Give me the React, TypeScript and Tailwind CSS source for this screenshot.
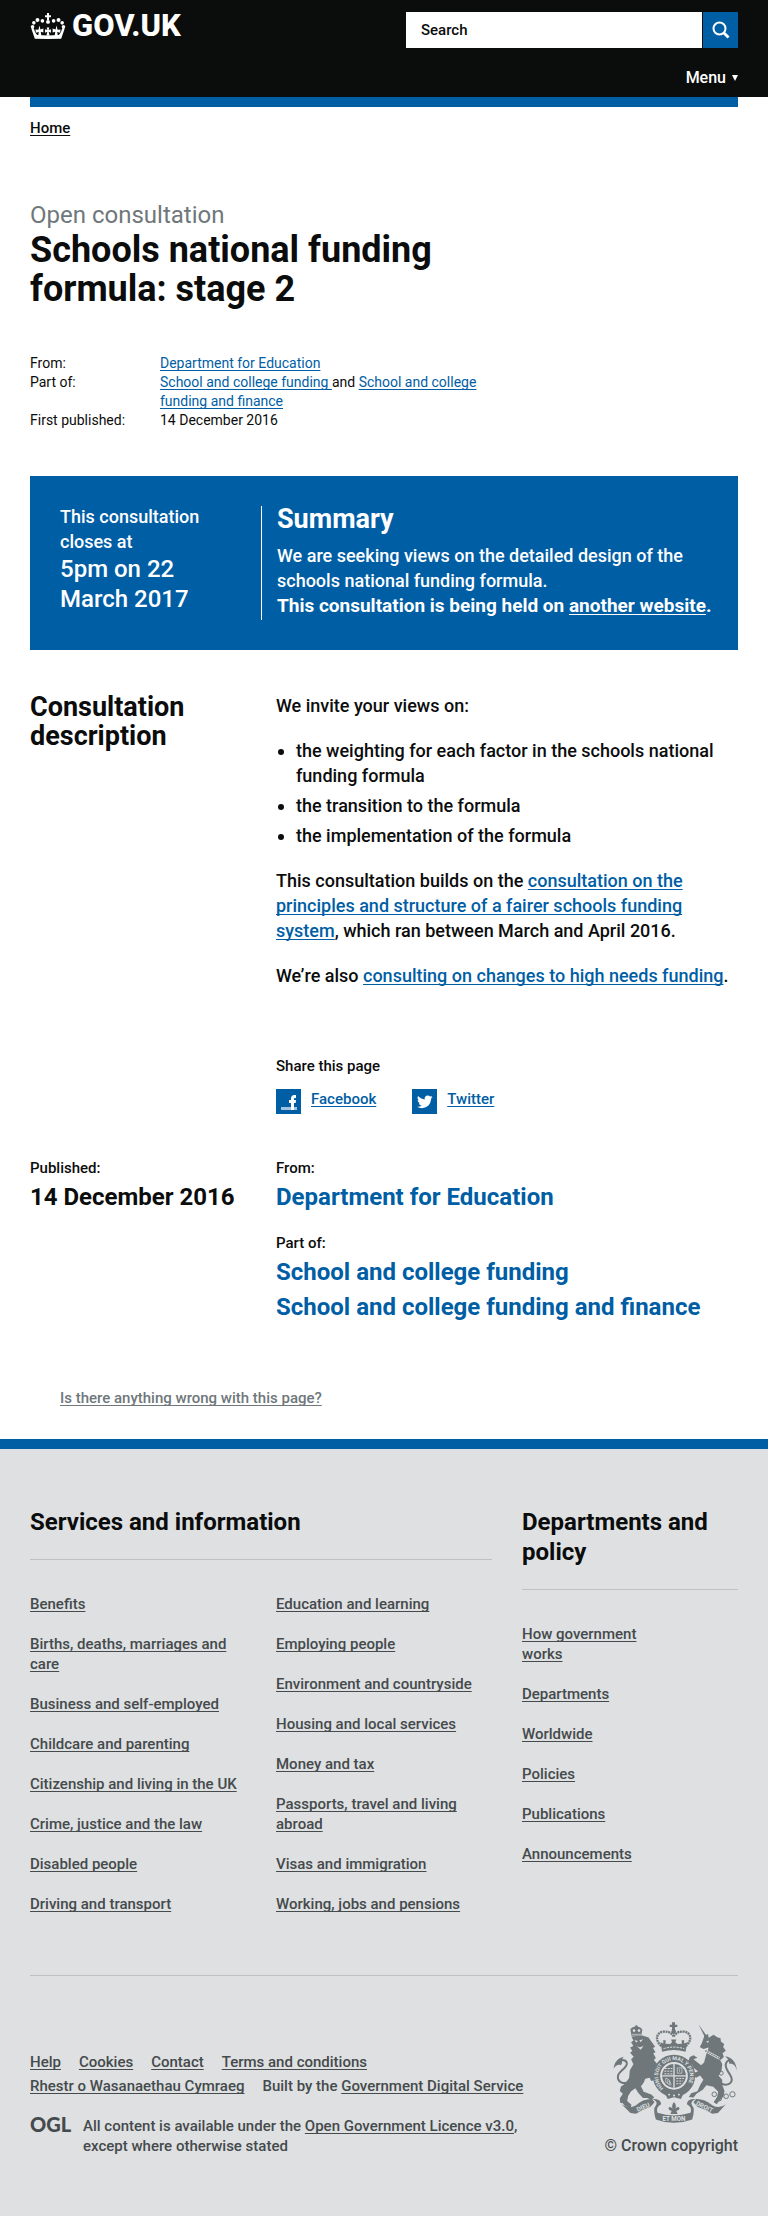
import type { ReactNode } from "react";

const u = "underline decoration-1 underline-offset-2 [text-decoration-skip-ink:none]";

function Link({ children, className = "text-[#005ea5]" }: { children: ReactNode; className?: string }) {
  return (
    <a href="#" className={`${u} ${className}`}>
      {children}
    </a>
  );
}

function CrownHalf() {
  return (
    <>
      <circle cx="7" cy="42" r="5.5" />
      <circle cx="11" cy="30" r="5.5" />
      <circle cx="22" cy="21" r="6" />
      <circle cx="37" cy="24" r="5.5" />
      <path d="M3 46 L11 46 C13 56 17 63 22 67 L54 68 V79 L14 78 Z" />
      <path d="M28 38 L31 50 L40 47 V59 L32 57 L34 70 H24 L26 58 L17 60 L16 50 L25 51 Z" />
    </>
  );
}

function Crown() {
  return (
    <svg viewBox="0 0 108 79" className="h-[26px] w-[36px]" fill="#fff" aria-hidden="true">
      <CrownHalf />
      <g transform="translate(108 0) scale(-1 1)">
        <CrownHalf />
      </g>
      <path d="M51 0h6v7h6v6h-6v8h-6v-8h-6V7h6z" />
      <circle cx="54" cy="27" r="6" />
      <path d="M50 44h8l-2 8 7-3v11l-7-3 3 12H49l3-12-7 3V49l7 3z" />
    </svg>
  );
}

function Crest() {
  return (
    <svg viewBox="12 12 380 312" className="h-[103px] w-[126px]" fill="#6f777b" aria-hidden="true">
      {/* lion */}
      <g fill="none" stroke="#6f777b">
        <path d="M66 196 C44 206 28 196 29 180 C30 164 54 158 56 142 C57 132 46 128 34 132" strokeWidth="6" />
      </g>
      <path d="M16 156 C18 138 28 124 47 120 C38 128 46 136 38 146 C32 142 22 146 16 156Z" />
      <path d="M67 36 L74 31 L85 28 L97 32 L103 38 L100 56 L70 57Z" />
      <circle cx="85" cy="29" r="4" />
      <g fill="#dee0e2">
        <circle cx="78" cy="41" r="4" />
        <circle cx="93" cy="41" r="4" />
        <path d="M71 51h28v2H71z" />
      </g>
      <path d="M70 59 L103 56 L122 62 L132 76 L142 90 L135 94 L143 107 L136 110 L144 124 L138 130 L148 142 L160 152 L156 160 L147 156 L154 174 L145 179 L137 173 L143 190 L130 194 L125 184 L112 187 L107 199 L99 210 L107 226 L130 235 L139 243 L131 251 L118 245 L105 245 L91 230 L82 216 L69 225 L60 239 L57 254 L70 266 L68 274 L51 270 L44 261 L36 260 L35 246 L44 232 L35 224 L38 211 L51 201 L63 185 L65 162 L76 143 L69 128 L77 120 L66 108 L73 103 L66 92 L76 88 L69 76 L76 71Z" />
      <path d="M80 69 L90 73 L84 77Z M94 70 L105 67 L98 76Z M86 88 Q95 95 107 87 L98 99Z" fill="#dee0e2" />

      {/* unicorn */}
      <path d="M273 22 L298 57 L293 62Z" />
      <path d="M291 57 L302 51 L304 63 L319 54 L330 61 L340 64 L341 74 L351 82 L348 91 L356 102 L346 110 L350 121 L340 130 L330 120 L300 106 L304 92 L288 97 L277 91 L283 80Z" />
      <path d="M298 108 L338 129 L345 142 L343 163 L334 178 L345 190 L345 205 L352 224 L349 241 L337 253 L328 264 L319 257 L329 244 L333 226 L318 211 L297 207 L286 220 L267 232 L258 244 L244 242 L251 231 L270 225 L278 207 L288 190 L278 177 L266 184 L253 175 L249 160 L262 168 L272 164 L259 154 L253 143 L241 138 L247 121 L258 116 L270 123 L258 128 L281 146 L290 138Z" />
      <path d="M294 102 L336 125" stroke="#dee0e2" strokeWidth="8" />
      <path d="M294 102 L336 125" stroke="#6f777b" strokeWidth="5" strokeDasharray="4 3" />
      <path d="M296 75 l9-4-3 8z" fill="#dee0e2" />
      <g fill="none" stroke="#6f777b">
        <path d="M343 202 C363 211 379 198 372 181 C366 167 350 155 357 139 C361 130 369 130 375 134" strokeWidth="6" />
        <g strokeWidth="3">
          <circle cx="321" cy="234" r="7" />
          <circle cx="336" cy="247" r="7" />
          <circle cx="357" cy="240" r="7" />
          <circle cx="376" cy="234" r="8" />
          <circle cx="342" cy="170" r="6" />
        </g>
      </g>
      <path d="M389 163 C386 146 378 140 367 142 C366 130 360 126 354 119 C374 122 389 138 389 163Z" />

      {/* royal crown */}
      <path d="M193 16h9v7h7v7h-7v9h-9v-9h-7v-7h7z" />
      <circle cx="198" cy="44" r="7" />
      <g fill="none" stroke="#6f777b" strokeWidth="7" strokeDasharray="6 2">
        <path d="M160 88 C138 66 148 45 169 44 C186 43 194 52 198 59" />
        <path d="M235 88 C258 66 248 45 227 44 C210 43 202 52 198 59" />
      </g>
      <path d="M158 76 L167 80 L166 70 H174 L173 81 L187 82 L193 76 L190 68 H206 L203 76 L210 82 L223 81 L222 70 H230 L229 80 L239 76 L234 105 Q198 95 163 105Z" />
      <path d="M167 96 Q198 86 230 96" fill="none" stroke="#dee0e2" strokeWidth="3" strokeDasharray="7 3" />

      {/* garter and shield */}
      <circle cx="199" cy="178" r="53" fill="none" stroke="#6f777b" strokeWidth="22" />
      <circle cx="199" cy="178" r="40" fill="#dee0e2" />
      <circle cx="199" cy="178" r="36" />
      <path id="garter" d="M170 217 A48 48 0 1 1 228 217" fill="none" />
      <text fontFamily="Roboto" fontSize="16" fontWeight="700" fill="#dee0e2">
        <textPath href="#garter" startOffset="3">
          HONI SOIT QUI MAL Y PENSE
        </textPath>
      </text>
      <g stroke="#dee0e2" strokeWidth="3" fill="none">
        <path d="M199 142V214M163 178H235" strokeWidth="4" />
        <path d="M171 156h23M170 164h24M170 172h24" strokeDasharray="6 3" />
        <path d="M206 186h23M206 194h20M206 202h15" strokeDasharray="6 3" />
        <path d="M209 154h14v16h-14zM216 158v8" strokeWidth="2" />
        <path d="M174 185q14 3 16 22M174 185v12l14 10M180 189v12M185 192v11" strokeWidth="2" />
      </g>
      <path d="M172 232 L199 237 L227 232 L220 248 L199 243 L180 248Z" />
      <g fill="#dee0e2">
        <circle cx="184" cy="235" r="3" />
        <circle cx="199" cy="238" r="3" />
        <circle cx="214" cy="235" r="3" />
      </g>

      {/* rose and scroll */}
      <path d="M199 257 Q208 267 203 278 Q211 268 216 276 Q214 285 206 284 L210 294 H188 L192 284 Q184 285 182 276 Q187 268 195 278 Q190 267 199 257Z" />
      <path d="M40 264 Q62 280 84 267 Q106 247 132 248 L140 258 L128 272 Q104 280 84 293 L67 291Z" />
      <path d="M356 264 Q336 280 315 267 Q291 247 266 248 L258 258 L270 272 Q295 280 315 293 L332 291Z" />
      <path d="M133 248 Q160 247 160 264 Q143 273 149 290 Q198 306 249 290 Q255 273 238 264 Q238 247 265 248 Q246 256 254 268 Q264 278 254 310 Q198 331 144 310 Q134 278 144 268 Q152 256 133 248Z" />
      <g fontFamily="Roboto" fontSize="19" fontWeight="700" fill="#dee0e2" textAnchor="middle">
        <text x="106" y="279" transform="rotate(-24 106 274)">
          DIEU
        </text>
        <text x="199" y="315">
          ET MON
        </text>
        <text x="290" y="277" transform="rotate(26 288 274)">
          DROIT
        </text>
      </g>
    </svg>
  );
}

function FacebookIcon() {
  return (
    <svg viewBox="0 0 25 25" className="size-[25px] shrink-0" aria-hidden="true">
      <path fill="#005ea5" d="M0 0h25v25H0z" />
      <path fill="#9fc3e0" d="M5 18h16v3H5z" />
      <path fill="#fff" d="M15 21v-7h-2v-3h2V9.500c0-2.300 1.300-3.500 3.300-3.500H20v3h-1.200c-.6 0-.8.3-.8.900V11h2l-.3 3H18v7z" />
    </svg>
  );
}

function TwitterIcon() {
  return (
    <svg viewBox="0 0 25 25" className="size-[25px] shrink-0" aria-hidden="true">
      <path fill="#005ea5" d="M0 0h25v25H0z" />
      <g transform="translate(5 5) scale(.65)">
        <path
          fill="#fff"
          d="M23.950 4.570a10 10 0 0 1-2.820.77 4.960 4.960 0 0 0 2.160-2.720c-.95.55-2 .95-3.130 1.180a4.920 4.920 0 0 0-8.380 4.480C7.690 8.090 4.070 6.130 1.640 3.160a4.920 4.920 0 0 0 1.520 6.570 4.900 4.900 0 0 1-2.230-.61v.06c0 2.380 1.690 4.370 3.950 4.830a5 5 0 0 1-2.210.08 4.940 4.940 0 0 0 4.600 3.420A9.870 9.870 0 0 1 0 19.540a13.990 13.990 0 0 0 7.550 2.210c9.050 0 14-7.500 14-13.980 0-.21 0-.42-.02-.63a9.940 9.940 0 0 0 2.460-2.550z"
        />
      </g>
    </svg>
  );
}

const services1 = [
  "Benefits",
  "Births, deaths, marriages and care",
  "Business and self-employed",
  "Childcare and parenting",
  "Citizenship and living in the UK",
  "Crime, justice and the law",
  "Disabled people",
  "Driving and transport",
];
const services2 = [
  "Education and learning",
  "Employing people",
  "Environment and countryside",
  "Housing and local services",
  "Money and tax",
  "Passports, travel and living abroad",
  "Visas and immigration",
  "Working, jobs and pensions",
];
const policy = ["How government works", "Departments", "Worldwide", "Policies", "Publications", "Announcements"];

function LinkList({ items, className = "" }: { items: string[]; className?: string }) {
  return (
    <ul className={`flex flex-col gap-5 ${className}`}>
      {items.map((item) => (
        <li key={item}>
          <Link className="text-[#454a4c]">{item}</Link>
        </li>
      ))}
    </ul>
  );
}

export default function App() {
  return (
    <div className="bg-white font-[Roboto,sans-serif] text-[15px] leading-5 font-medium text-[#0b0c0c]">
      <header className="bg-[#0b0c0c] px-[30px]">
        <div className="flex items-start justify-between pt-3">
          <a href="#" className="flex items-center gap-[6px] text-white" aria-label="GOV.UK">
            <Crown />
            <span className="text-[31px] leading-7 font-extrabold">GOV.UK</span>
          </a>
          <form className="flex w-[332px] gap-px" onSubmit={(e) => e.preventDefault()}>
            <input
              type="search"
              aria-label="Search"
              placeholder="Search"
              className="h-9 min-w-0 flex-1 bg-white px-[15px] text-[#0b0c0c] outline-none placeholder:text-[#0b0c0c] placeholder:opacity-100"
            />
            <button type="submit" aria-label="Search GOV.UK" className="flex h-9 w-[35px] items-center justify-center bg-[#005ea5]">
              <svg viewBox="0 0 18 18" className="size-[18px]" fill="none" stroke="#fff" aria-hidden="true">
                <circle cx="7.500" cy="7.500" r="6" strokeWidth="2" />
                <path d="M11.500 11.500 16.500 16.500" strokeWidth="2.800" />
              </svg>
            </button>
          </form>
        </div>
        <div className="flex justify-end pt-5 pb-[9px]">
          <button type="button" className="flex items-center gap-[6px] text-base leading-5 text-white">
            Menu
            <svg viewBox="0 0 6 6" className="size-[6px]" fill="#fff" aria-hidden="true">
              <path d="M0 0h6L3 6z" />
            </svg>
          </button>
        </div>
      </header>

      <main className="px-[30px]">
        <div className="h-[10px] bg-[#005ea5]" />
        <nav className="pt-[11px]" aria-label="Breadcrumb">
          <Link className="text-[#0b0c0c]">Home</Link>
        </nav>

        <div className="grid grid-cols-3 gap-[30px] pt-[62px]">
          <div className="col-span-2">
            <p className="text-2xl leading-[31px] font-normal text-[#6f777b]">Open consultation</p>
            <h1 className="text-4xl leading-[39px] font-bold">Schools national funding formula: stage 2</h1>
            <dl className="mt-[45px] grid grid-cols-[130px_1fr] text-sm leading-[19px] font-normal">
              <dt>From:</dt>
              <dd>
                <Link>Department for Education</Link>
              </dd>
              <dt>Part of:</dt>
              <dd>
                <Link>School and college funding </Link>and <Link>School and college funding and finance</Link>
              </dd>
              <dt>First published:</dt>
              <dd>14 December 2016</dd>
            </dl>
          </div>
        </div>

        <section className="mt-[46px] flex bg-[#005ea5] py-[28px] pr-5 pl-[30px] text-lg leading-[25px] text-white">
          <div className="w-[201px] shrink-0 pr-10">
            <p>This consultation closes at</p>
            <p className="text-2xl leading-[30px]">5pm on 22 March 2017</p>
          </div>
          <div className="my-[2px] w-px shrink-0 bg-white" />
          <div className="pb-1 pl-[15px]">
            <h2 className="mb-[9px] text-[27px] leading-[30px] font-bold">Summary</h2>
            <p>We are seeking views on the detailed design of the schools national funding formula.</p>
            <p className="text-[19px] leading-[25px] font-bold">
              This consultation is being held on <Link className="text-white">another website</Link>.
            </p>
          </div>
        </section>

        <section className="mt-[43px] grid grid-cols-3 gap-[30px]">
          <h2 className="text-[27px] leading-[29px] font-bold">Consultation description</h2>
          <div className="col-span-2">
            <div className="flex flex-col gap-5 text-lg leading-[25px]">
              <p>We invite your views on:</p>
              <ul className="flex list-disc flex-col gap-[5px] pl-5">
                <li>the weighting for each factor in the schools national funding formula</li>
                <li>the transition to the formula</li>
                <li>the implementation of the formula</li>
              </ul>
              <p>
                This consultation builds on the{" "}
                <Link>consultation on the principles and structure of a fairer schools funding system</Link>, which ran between
                March and April 2016.
              </p>
              <p>
                We’re also <Link>consulting on changes to high needs funding</Link>.
              </p>
            </div>
            <div className="mt-[68px]">
              <p>Share this page</p>
              <div className="mt-[13px] flex gap-9">
                <a href="#" className="flex gap-[10px] text-[#005ea5]">
                  <FacebookIcon />
                  <span className={u}>Facebook</span>
                </a>
                <a href="#" className="flex gap-[10px] text-[#005ea5]">
                  <TwitterIcon />
                  <span className={u}>Twitter</span>
                </a>
              </div>
            </div>
          </div>
        </section>

        <section className="mt-11 grid grid-cols-3 gap-[30px]">
          <div>
            <p>Published:</p>
            <p className="mt-1 text-2xl leading-[30px] font-bold">14 December 2016</p>
          </div>
          <div className="col-span-2">
            <p>From:</p>
            <a href="#" className="mt-1 block text-2xl leading-[30px] font-bold text-[#005ea5]">
              Department for Education
            </a>
            <p className="mt-[21px]">Part of:</p>
            <div className="mt-1 flex flex-col gap-[5px] text-2xl leading-[30px] font-bold text-[#005ea5]">
              <a href="#">School and college funding</a>
              <a href="#">School and college funding and finance</a>
            </div>
          </div>
        </section>

        <div className="mt-[66px] mb-[31px] pl-[30px]">
          <Link className="text-[#6f777b]">Is there anything wrong with this page?</Link>
        </div>
      </main>

      <footer className="border-t-10 border-[#005ea5] bg-[#dee0e2] px-[30px] pt-[58px] pb-[60px] text-[#454a4c]">
        <div className="grid grid-cols-3 gap-[30px] border-b border-[#bfc1c3] pb-[61px]">
          <div className="col-span-2">
            <h2 className="mb-[34px] border-b border-[#bfc1c3] pb-[22px] text-2xl leading-[30px] font-bold text-[#0b0c0c]">
              Services and information
            </h2>
            <div className="grid grid-cols-2 gap-[30px]">
              <LinkList items={services1} />
              <LinkList items={services2} />
            </div>
          </div>
          <div>
            <h2 className="mb-[34px] border-b border-[#bfc1c3] pb-[22px] text-2xl leading-[30px] font-bold text-[#0b0c0c]">
              Departments and policy
            </h2>
            <LinkList items={policy} className="pr-[60px]" />
          </div>
        </div>

        <div className="flex items-end justify-between pt-[45px]">
          <div>
            <div className="flex max-w-[530px] flex-wrap gap-x-[18px] leading-6">
              <Link className="text-[#454a4c]">Help</Link>
              <Link className="text-[#454a4c]">Cookies</Link>
              <Link className="text-[#454a4c]">Contact</Link>
              <Link className="text-[#454a4c]">Terms and conditions</Link>
              <Link className="text-[#454a4c]">Rhestr o Wasanaethau Cymraeg</Link>
              <span>
                Built by the <Link className="text-[#454a4c]">Government Digital Service</Link>
              </span>
            </div>
            <div className="mt-[18px] flex gap-3">
              <span className="w-[41px] shrink-0 font-[Lato,sans-serif] text-xl leading-4 font-black">OGL</span>
              <p>
                All content is available under the <Link className="text-[#454a4c]">Open Government Licence v3.0</Link>,<br />
                except where otherwise stated
              </p>
            </div>
          </div>
          <a href="#" className="flex flex-col items-end gap-3">
            <Crest />
            <span className="text-base leading-5">© Crown copyright</span>
          </a>
        </div>
      </footer>
    </div>
  );
}
